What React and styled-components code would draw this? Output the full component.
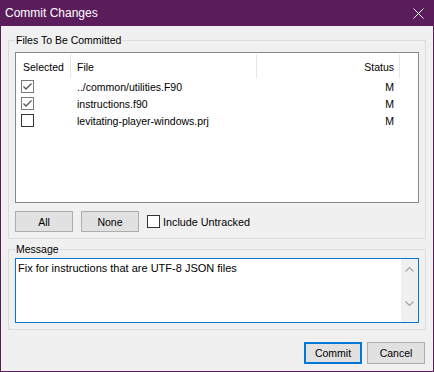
import React from "react";
import styled, { createGlobalStyle } from "styled-components";

const Global = createGlobalStyle`
  html, body { margin: 0; padding: 0; background: #f0f0f0; }
  * { box-sizing: border-box; }
`;

const PURPLE = "#5a1c5b";
const FONT = `"Liberation Sans", Arial, sans-serif`;

const Dialog = styled.div`
  width: 434px;
  height: 372px;
  border: 1px solid ${PURPLE};
  background: #f0f0f0;
  display: flex;
  flex-direction: column;
  font-family: ${FONT};
  font-size: 10.5px;
  color: #000;
`;

const TitleBar = styled.div`
  height: 25px;
  flex: none;
  background: ${PURPLE};
  color: #fff;
  display: flex;
  align-items: center;
  justify-content: space-between;
  padding: 0 9px 1px 4px;
  font-size: 12px;
`;

const Body = styled.div`
  flex: 1;
  display: flex;
  flex-direction: column;
  padding: 7px;
`;

const GroupBox = styled.fieldset`
  margin: ${(p) => p.$mt || 0}px 0 0 0;
  border: 1px solid #dcdcdc;
  padding: ${(p) => p.$pt}px 6px ${(p) => p.$pb}px 6px;
  min-inline-size: 0;
`;

const Legend = styled.legend`
  padding: 0 1px;
  margin: 0;
  line-height: 14px;
  font-size: 10.5px;
`;

const ListBox = styled.div`
  height: 151px;
  border: 1px solid #828790;
  background: #fff;
`;

const COLS = "55px 186px 143px 1fr";

const HeaderRow = styled.div`
  display: grid;
  grid-template-columns: ${COLS};
  height: 25px;
`;

const HeaderCell = styled.div`
  display: flex;
  align-items: center;
  justify-content: ${(p) => (p.$right ? "flex-end" : "flex-start")};
  padding: 1px ${(p) => (p.$right ? 5 : 0)}px 0 ${(p) => p.$pl ?? 6}px;
  border-right: ${(p) => (p.$last ? "none" : "1px solid #e5e5e5")};
  margin-top: 1px;
`;

const Row = styled.div`
  display: grid;
  grid-template-columns: ${COLS};
  height: 17px;
  align-items: center;
`;

const Cell = styled.div`
  display: flex;
  align-items: center;
  justify-content: ${(p) => (p.$right ? "flex-end" : "flex-start")};
  padding: 0 ${(p) => (p.$right ? 6 : 0)}px 0 ${(p) => p.$pl ?? 6}px;
  white-space: nowrap;
`;

const Box = styled.span`
  width: 13px;
  height: 13px;
  flex: none;
  border: 1px solid ${(p) => (p.$checked ? "#7a7a7a" : "#333")};
  background: #fff;
  display: inline-flex;
  align-items: center;
  justify-content: center;
`;

const ButtonRow = styled.div`
  margin-top: 8px;
  display: flex;
  align-items: center;
  gap: 8px;
`;

const Button = styled.button`
  width: 58px;
  height: ${(p) => p.$h || 21}px;
  padding: 0;
  margin: 0;
  font-family: ${FONT};
  font-size: 10.5px;
  color: #000;
  background: #e1e1e1;
  border: ${(p) => (p.$default ? "2px solid #0078d7" : "1px solid #adadad")};
  border-radius: 0;
`;

const CheckLabel = styled.label`
  display: flex;
  align-items: center;
  gap: 3px;
  font-size: 10.8px;
`;

const MessageBox = styled.div`
  height: 65px;
  border: 1px solid #0078d7;
  background: #fff;
  display: flex;
`;

const MessageText = styled.div`
  flex: 1;
  padding: 2px 2px;
  line-height: 14px;
  font-size: 11px;
`;

const ScrollTrack = styled.div`
  width: 17px;
  flex: none;
  background: #f0f0f0;
  display: flex;
  flex-direction: column;
  align-items: center;
  justify-content: space-between;
  padding: 8px 0 16px;
`;

const Footer = styled.div`
  margin-top: 12px;
  display: flex;
  justify-content: flex-end;
  gap: 5px;
  padding-right: 1px;
`;

const Check = ({ checked }) => (
  <Box $checked={checked}>
    {checked && (
      <svg width="11" height="11" viewBox="0 0 11 11">
        <path d="M1.5 5.5 L4 8 L9.5 2.5" fill="none" stroke="#555" strokeWidth="1.3" />
      </svg>
    )}
  </Box>
);

const Chevron = ({ down }) => (
  <svg width="9" height="5" viewBox="0 0 9 5">
    <path
      d={down ? "M0.5 0.5 L4.5 4.5 L8.5 0.5" : "M0.5 4.5 L4.5 0.5 L8.5 4.5"}
      fill="none"
      stroke="#a6a6a6"
      strokeWidth="1.2"
    />
  </svg>
);

const files = [
  { name: "../common/utilities.F90", checked: true, status: "M" },
  { name: "instructions.f90", checked: true, status: "M" },
  { name: "levitating-player-windows.prj", checked: false, status: "M" },
];

export default function App() {
  return (
    <>
      <Global />
      <Dialog>
        <TitleBar>
          <span>Commit Changes</span>
          <svg width="11" height="11" viewBox="0 0 11 11">
            <path d="M0.5 0.5 L10.5 10.5 M10.5 0.5 L0.5 10.5" stroke="#fff" strokeWidth="1" />
          </svg>
        </TitleBar>
        <Body>
          <GroupBox $pt={5} $pb={6}>
            <Legend>Files To Be Committed</Legend>
            <ListBox>
              <HeaderRow>
                <HeaderCell $pl={7}>Selected</HeaderCell>
                <HeaderCell>File</HeaderCell>
                <HeaderCell $right>Status</HeaderCell>
                <HeaderCell $last />
              </HeaderRow>
              {files.map((f) => (
                <Row key={f.name}>
                  <Cell $pl={5}>
                    <Check checked={f.checked} />
                  </Cell>
                  <Cell>{f.name}</Cell>
                  <Cell $right>{f.status}</Cell>
                  <Cell />
                </Row>
              ))}
            </ListBox>
            <ButtonRow>
              <Button>All</Button>
              <Button>None</Button>
              <CheckLabel>
                <Check checked={false} />
                Include Untracked
              </CheckLabel>
            </ButtonRow>
          </GroupBox>
          <GroupBox $mt={3} $pt={2} $pb={6}>
            <Legend>Message</Legend>
            <MessageBox>
              <MessageText>Fix for instructions that are UTF-8 JSON files</MessageText>
              <ScrollTrack>
                <Chevron />
                <Chevron down />
              </ScrollTrack>
            </MessageBox>
          </GroupBox>
          <Footer>
            <Button $default $h={22}>Commit</Button>
            <Button $h={22}>Cancel</Button>
          </Footer>
        </Body>
      </Dialog>
    </>
  );
}
